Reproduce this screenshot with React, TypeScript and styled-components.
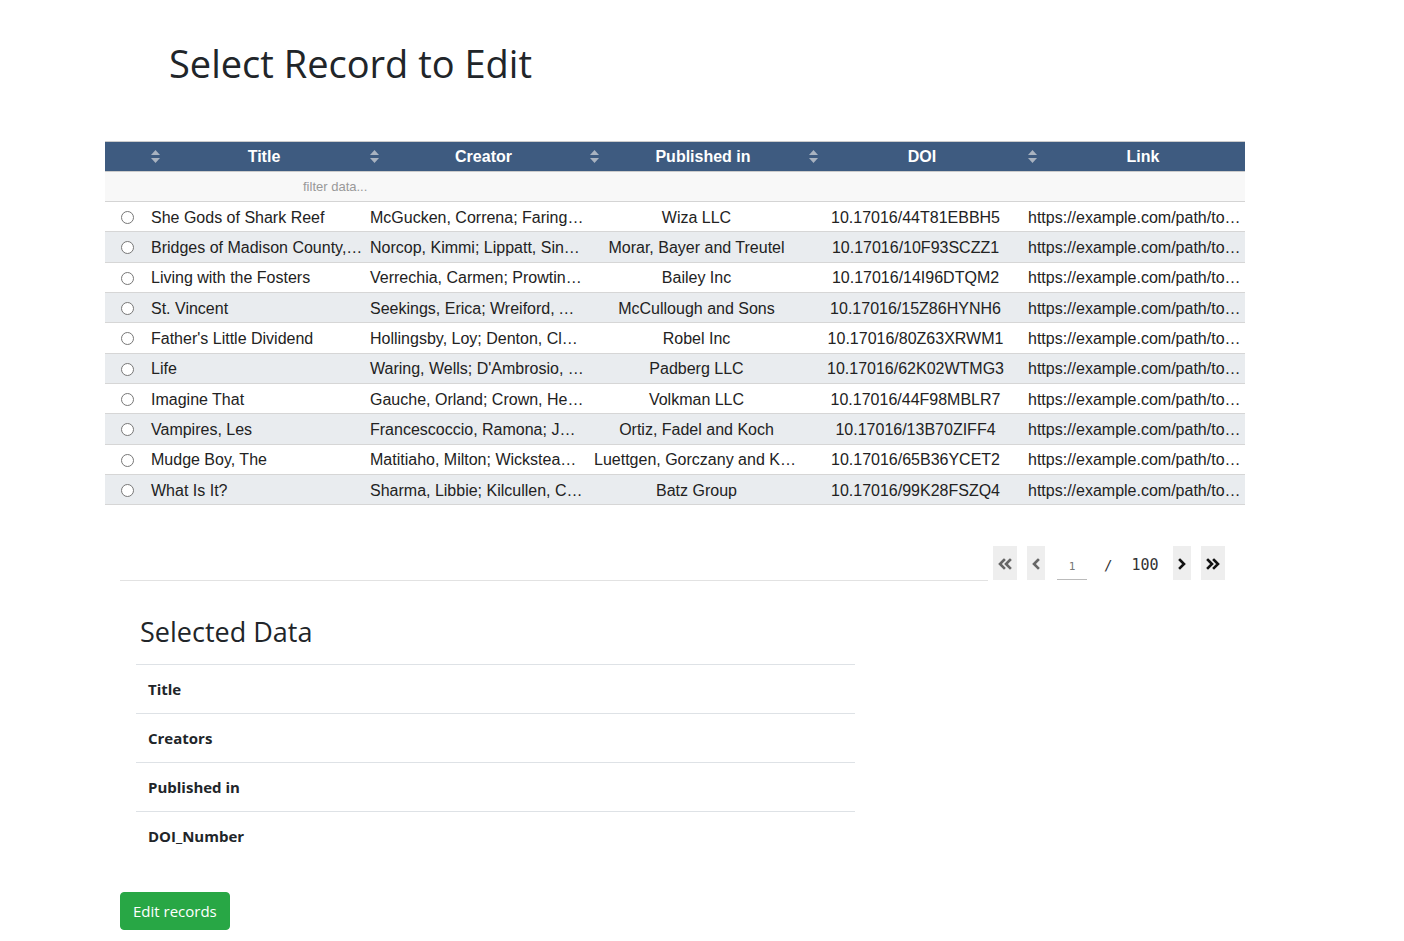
import styled, { createGlobalStyle } from 'styled-components'

type Row = { title: string; creator: string; published: string; doi: string; link: string }

const rows: Row[] = [
  { title: 'She Gods of Shark Reef', creator: 'McGucken, Correna; Faringdon, Jo', published: 'Wiza LLC', doi: '10.17016/44T81EBBH5', link: 'https://example.com/path/to/record' },
  { title: 'Bridges of Madison County, The', creator: 'Norcop, Kimmi; Lippatt, Sinclair', published: 'Morar, Bayer and Treutel', doi: '10.17016/10F93SCZZ1', link: 'https://example.com/path/to/record' },
  { title: 'Living with the Fosters', creator: 'Verrechia, Carmen; Prowting, Ad', published: 'Bailey Inc', doi: '10.17016/14I96DTQM2', link: 'https://example.com/path/to/record' },
  { title: 'St. Vincent', creator: 'Seekings, Erica; Wreiford, Ashley', published: 'McCullough and Sons', doi: '10.17016/15Z86HYNH6', link: 'https://example.com/path/to/record' },
  { title: "Father's Little Dividend", creator: 'Hollingsby, Loy; Denton, Clarabelle', published: 'Robel Inc', doi: '10.17016/80Z63XRWM1', link: 'https://example.com/path/to/record' },
  { title: 'Life', creator: "Waring, Wells; D'Ambrosio, Mark", published: 'Padberg LLC', doi: '10.17016/62K02WTMG3', link: 'https://example.com/path/to/record' },
  { title: 'Imagine That', creator: 'Gauche, Orland; Crown, Helene', published: 'Volkman LLC', doi: '10.17016/44F98MBLR7', link: 'https://example.com/path/to/record' },
  { title: 'Vampires, Les', creator: 'Francescoccio, Ramona; Jacobs', published: 'Ortiz, Fadel and Koch', doi: '10.17016/13B70ZIFF4', link: 'https://example.com/path/to/record' },
  { title: 'Mudge Boy, The', creator: 'Matitiaho, Milton; Wickstead, Al', published: 'Luettgen, Gorczany and Kozey', doi: '10.17016/65B36YCET2', link: 'https://example.com/path/to/record' },
  { title: 'What Is It?', creator: 'Sharma, Libbie; Kilcullen, Corny', published: 'Batz Group', doi: '10.17016/99K28FSZQ4', link: 'https://example.com/path/to/record' },
]

const columns: { key: keyof Row; label: string; width: number; center?: boolean; padRight: number }[] = [
  { key: 'title', label: 'Title', width: 219, padRight: 0 },
  { key: 'creator', label: 'Creator', width: 220, padRight: 0 },
  { key: 'published', label: 'Published in', width: 219, center: true, padRight: 4 },
  { key: 'doi', label: 'DOI', width: 219, center: true, padRight: 4 },
  { key: 'link', label: 'Link', width: 223, padRight: 4 },
]

const GlobalStyle = createGlobalStyle`
  body {
    margin: 0;
    background: #fff;
    font-family: 'Open Sans', sans-serif;
    color: #212529;
  }
`

const SortArrows = () => (
  <svg width="9" height="13" viewBox="0 0 9 13">
    <path d="M4.5 0 L9 5 L0 5 Z" fill="#a9b3c0" />
    <path d="M4.5 13 L9 8 L0 8 Z" fill="#a9b3c0" />
  </svg>
)

const Chevron = ({ double, left, dim }: { double?: boolean; left?: boolean; dim?: boolean }) => (
  <svg width={double ? 14 : 8} height="12" viewBox={double ? '0 0 14 12' : '0 0 8 12'}>
    <g
      fill="none"
      stroke={dim ? '#666' : '#111'}
      strokeWidth="2.6"
      strokeLinecap="square"
      transform={left ? `translate(${double ? 14 : 8} 0) scale(-1 1)` : undefined}
    >
      <path d="M2 2 L6 6 L2 10" />
      {double && <path d="M8 2 L12 6 L8 10" />}
    </g>
  </svg>
)

const App = () => {
  return (
    <Page>
      <GlobalStyle />
      <Heading>Select Record to Edit</Heading>

      <Table>
        <HeaderRow>
          <RadioCell />
          {columns.map(c => (
            <HeaderCell key={c.key} width={c.width}>
              <SortArrows />
              <HeaderTitle>{c.label}</HeaderTitle>
            </HeaderCell>
          ))}
        </HeaderRow>
        <FilterRow>filter data...</FilterRow>
        {rows.map((r, i) => (
          <DataRow key={r.doi} striped={i % 2 === 1}>
            <RadioCell>
              <Radio />
            </RadioCell>
            {columns.map(c => (
              <Cell key={c.key} width={c.width} center={c.center} padRight={c.padRight}>
                {r[c.key]}
              </Cell>
            ))}
          </DataRow>
        ))}
      </Table>

      <PagerBar>
        <PagerLine />
        <PagerButton gap={5}>
          <Chevron double left dim />
        </PagerButton>
        <PagerButton gap={10} narrow>
          <Chevron left dim />
        </PagerButton>
        <PageInput>1</PageInput>
        <Slash>/</Slash>
        <PageCount>100</PageCount>
        <PagerButton gap={14} narrow>
          <Chevron />
        </PagerButton>
        <PagerButton gap={10}>
          <Chevron double />
        </PagerButton>
      </PagerBar>

      <Selected>
        <SubHeading>Selected Data</SubHeading>
        <InfoTable>
          {['Title', 'Creators', 'Published in', 'DOI_Number'].map(l => (
            <InfoRow key={l}>{l}</InfoRow>
          ))}
        </InfoTable>
      </Selected>

      <EditButton>Edit records</EditButton>
    </Page>
  )
}

export default App

const Page = styled.div`
  width: 1404px;
  padding-bottom: 11px;
`
const Heading = styled.h1`
  margin: 0;
  padding: 39px 0 0 169px;
  height: 141px;
  box-sizing: border-box;
  font-size: 38px;
  font-weight: 400;
  line-height: 48px;
  color: #212529;
`
const Table = styled.div`
  margin-left: 105px;
  width: 1140px;
  font-family: 'Liberation Sans', Arial, sans-serif;
  font-size: 16px;
  color: #222;
  border-top: 1px solid #ccc;
`
const HeaderRow = styled.div`
  display: flex;
  height: 29px;
  background: #3e5b80;
  color: #fff;
  font-weight: 700;
  border-bottom: 1px solid #ccc;
`
const RadioCell = styled.div`
  width: 40px;
  flex-shrink: 0;
  display: flex;
  align-items: center;
  justify-content: center;
  padding-left: 4px;
  box-sizing: border-box;
`
const HeaderCell = styled.div<{ width: number }>`
  width: ${({ width }) => width}px;
  flex-shrink: 0;
  display: flex;
  align-items: center;
  padding-left: 6px;
  box-sizing: border-box;
`
const HeaderTitle = styled.span`
  flex: 1;
  text-align: center;
  padding-left: 4px;
`
const FilterRow = styled.div`
  height: 29px;
  background: #f8f8f8;
  border-bottom: 1px solid #d4d4d4;
  padding-left: 198px;
  font-size: 13px;
  line-height: 29px;
  color: #999;
`
const DataRow = styled.div<{ striped: boolean }>`
  display: flex;
  height: 30.33px;
  box-sizing: border-box;
  align-items: center;
  padding-top: 2px;
  background: ${({ striped }) => (striped ? '#e9ecef' : '#fff')};
  border-bottom: 1px solid #d6d6d6;
`
const Cell = styled.div<{ width: number; center?: boolean; padRight: number }>`
  width: ${({ width }) => width}px;
  flex-shrink: 0;
  box-sizing: border-box;
  padding-left: ${({ center }) => (center ? 10 : 6)}px;
  padding-right: ${({ padRight }) => padRight}px;
  text-align: ${({ center }) => (center ? 'center' : 'left')};
  white-space: nowrap;
  overflow: hidden;
  text-overflow: ellipsis;
`
const Radio = styled.span`
  width: 11px;
  height: 11px;
  border: 1px solid #777;
  border-radius: 50%;
  background: #fff;
`
const PagerBar = styled.div`
  display: flex;
  align-items: center;
  margin: 41px 0 0 120px;
  height: 34px;
`
const PagerLine = styled.div`
  align-self: flex-end;
  flex-shrink: 0;
  width: 868px;
  border-bottom: 1px solid #e2e2e2;
  margin-bottom: -1px;
`
const PagerButton = styled.div<{ narrow?: boolean; gap: number }>`
  flex-shrink: 0;
  width: ${({ narrow }) => (narrow ? 18 : 24)}px;
  height: 34px;
  margin-left: ${({ gap }) => gap}px;
  background: #eee;
  display: flex;
  align-items: center;
  justify-content: center;
  padding-top: 2px;
  box-sizing: border-box;
`
const PageInput = styled.div`
  flex-shrink: 0;
  width: 30px;
  height: 32px;
  margin-left: 12px;
  border-bottom: 1px solid #bbb;
  font-family: 'DejaVu Sans Mono', monospace;
  font-size: 11px;
  line-height: 40px;
  text-align: center;
  color: #777;
`
const Slash = styled.span`
  flex-shrink: 0;
  margin-left: 17px;
  padding-top: 4px;
  font-family: 'DejaVu Sans Mono', monospace;
  font-size: 14px;
  color: #333;
`
const PageCount = styled(Slash)`
  margin-left: 19px;
  font-size: 15px;
`
const Selected = styled.div`
  margin: 34px 0 0 136px;
  width: 719px;
`
const SubHeading = styled.h3`
  margin: 0 0 15px 4px;
  padding-top: 1px;
  font-size: 27px;
  font-weight: 400;
  line-height: 34px;
  color: #212529;
`
const InfoTable = styled.div`
  display: flex;
  flex-direction: column;
`
const InfoRow = styled.div`
  border-top: 1px solid #dee2e6;
  padding: 12px;
  font-size: 15px;
  font-weight: 700;
  line-height: 24px;
  color: #212529;
`
const EditButton = styled.button`
  margin: 32px 0 0 120px;
  padding: 0 12px;
  height: 38px;
  border: 1px solid #28a745;
  border-radius: 4px;
  background: #28a745;
  color: #fff;
  font-family: 'Open Sans', sans-serif;
  font-size: 15px;
  line-height: 36px;
`
